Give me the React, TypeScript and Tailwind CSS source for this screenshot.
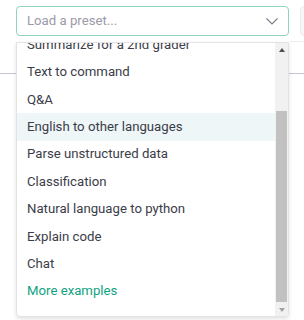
const presets = [
  "Summarize for a 2nd grader",
  "Text to command",
  "Q&A",
  "English to other languages",
  "Parse unstructured data",
  "Classification",
  "Natural language to python",
  "Explain code",
  "Chat",
];

export default function App() {
  return (
    <div
      className="relative w-[304px] h-[320px] overflow-hidden bg-white"
      style={{ fontFamily: "Roboto, 'Noto Sans', sans-serif" }}
    >
      {/* page behind the menu */}
      <div className="flex gap-[11px] pt-[6px] pl-[16px]">
        <div className="flex h-[30px] w-[273px] shrink-0 items-center justify-between rounded-[4px] border border-[#90d4b9] pl-[10px] pr-[10px]">
          <span className="text-[13.2px] text-[#9a9aa8]">Load a preset...</span>
          <svg width="12" height="7" viewBox="0 0 12 7" fill="none" className="mt-[1px]">
            <path d="M0.5 0.5 L6 6 L11.5 0.5" stroke="#7a7a88" strokeWidth="1.1" />
          </svg>
        </div>
        <div className="h-[30px] w-[40px] shrink-0 rounded-[4px] border border-[#ececf1] bg-[#f7f7f8]" />
      </div>
      <div className="ml-[290px] mt-[5px] h-px bg-[#ececf1]" />
      <div className="mt-[31px] h-px bg-[#c5c5d2]" />

      {/* open preset menu */}
      <div className="absolute left-[16px] top-[42px] flex h-[275px] w-[273px] overflow-hidden rounded-b-[4px] border border-[#e3e3e6] bg-white shadow-[0_2px_4px_rgba(0,0,0,0.12)]">
        <div className="flex-1 overflow-hidden">
          <ul className="mt-[-12px]">
            {presets.map((p) => (
              <li
                key={p}
                className={`flex h-[27.4px] items-center pl-[10px] text-[13.2px] text-[#3b3c48] ${
                  p === "English to other languages" ? "bg-[#eef6f8]" : ""
                }`}
              >
                {p}
              </li>
            ))}
            <li className="flex h-[27.4px] items-center pl-[10px] text-[13.2px] text-[#10a37f]">
              More examples
            </li>
          </ul>
        </div>
        <div className="flex w-[13px] flex-col bg-[#f1f1f1]">
          <div className="flex h-[13px] items-center justify-center">
            <div className="h-0 w-0 border-x-[3.5px] border-b-[4px] border-x-transparent border-b-[#505050]" />
          </div>
          <div className="flex-1 pt-[55px] pb-[1px]">
            <div className="mx-[1px] h-full bg-[#c1c1c1]" />
          </div>
          <div className="flex h-[13px] items-center justify-center">
            <div className="h-0 w-0 border-x-[3.5px] border-t-[4px] border-x-transparent border-t-[#a3a3a3]" />
          </div>
        </div>
      </div>
    </div>
  );
}
